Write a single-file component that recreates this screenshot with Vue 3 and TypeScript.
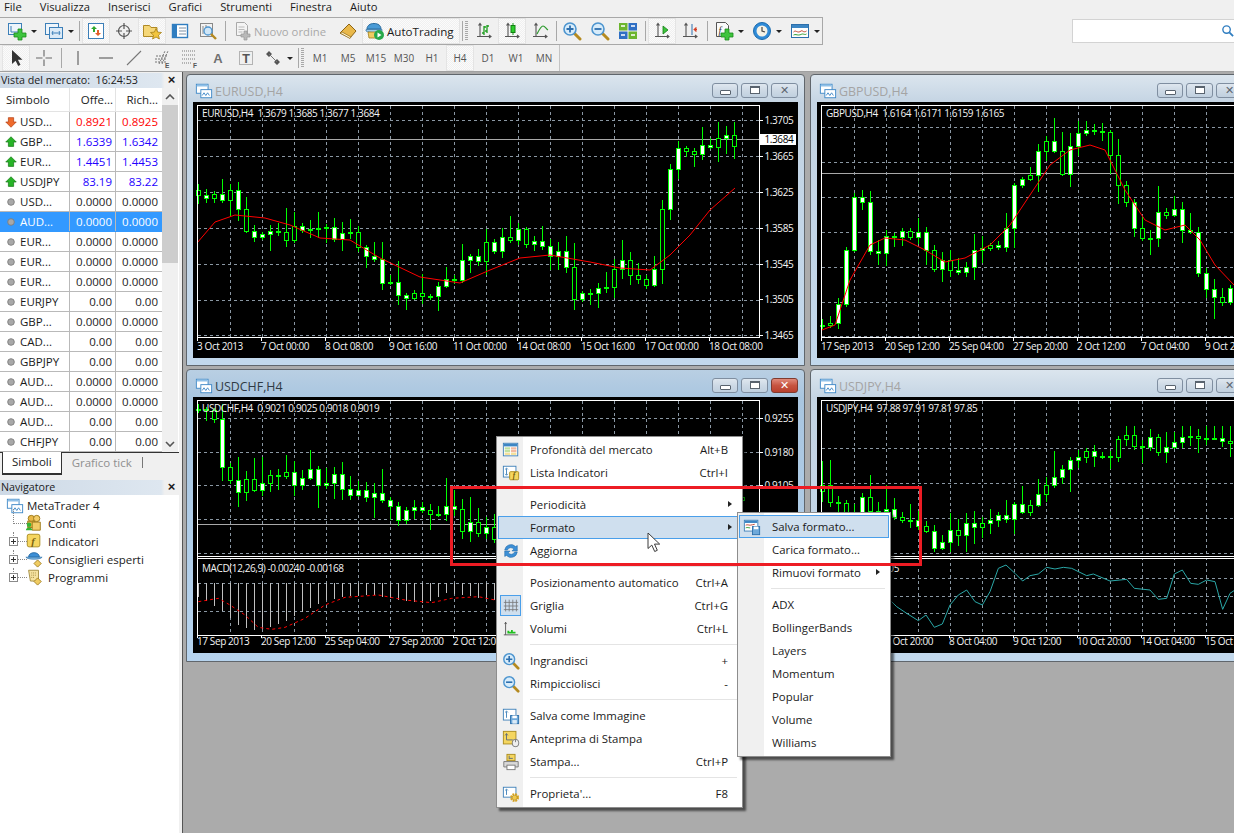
<script setup lang="ts">
type Pt = [number, number]

// ---- chart geometry helpers -------------------------------------------------
function rng(seed: number) {
  let s = seed
  return () => {
    s = (s * 16807) % 2147483647
    return (s % 1000) / 1000
  }
}

function at(path: Pt[], x: number) {
  if (x <= path[0][0]) return path[0][1]
  for (let i = 1; i < path.length; i++) {
    if (x <= path[i][0]) {
      const [x0, y0] = path[i - 1]
      const [x1, y1] = path[i]
      return y0 + ((y1 - y0) * (x - x0)) / (x1 - x0)
    }
  }
  return path[path.length - 1][1]
}

interface Candle { x: number; top: number; h: number; hi: number; lo: number; white: boolean }

function makeCandles(path: Pt[], x0: number, x1: number, seed: number, minY: number, maxY: number) {
  const r = rng(seed)
  const out: Candle[] = []
  let prev = at(path, x0)
  for (let x = x0; x <= x1; x += 8) {
    const close = at(path, x) + (r() - 0.5) * 18
    const top = Math.round(Math.max(minY, Math.min(prev, close)))
    const bot = Math.round(Math.min(maxY, Math.max(prev, close)))
    const hi = Math.max(minY, top - Math.round(r() * r() * 30) - 2)
    const lo = Math.min(maxY, bot + Math.round(r() * r() * 24) + 2)
    out.push({ x, top, h: Math.max(1, bot - top), hi, lo, white: close < prev ? r() > 0.25 : r() > 0.5 })
    prev = close
  }
  return out
}

function poly(pts: Pt[]) {
  return pts.map((p) => p.join(',')).join(' ')
}

function range(start: number, step: number, end: number) {
  const list: number[] = []
  for (let v = start; v <= end; v += step) list.push(v)
  return list
}

function scale3(ox: number, oy: number, raw: number[]): Pt[] {
  const pts: Pt[] = []
  for (let i = 0; i < raw.length; i += 2) pts.push([ox + raw[i] / 3, oy + raw[i + 1] / 3])
  return pts
}

const macdLow = scale3(185, 540, [40,170,120,220,160,255,200,270,240,268,300,245,360,210,420,180,480,170,560,165,640,180,720,190,780,160,860,170,930,180])
const macdSignal = scale3(185, 540, [40,185,100,175,135,195,180,225,220,262,260,268,300,262,360,235,420,195,480,172,580,165,660,180,740,188,800,175,880,170,930,180])
const jpyOsc = scale3(880, 500, [35,305,50,320,80,340,115,362,138,345,163,382,187,372,210,315,235,285,260,270,285,305,307,315,330,275,355,205,378,195,405,220,428,243,450,227,475,222,500,202,525,207,550,202,575,205,620,227,640,222,690,243,740,238,763,265,810,270,835,298,860,295,883,222,907,210,932,250,955,253,980,240,1005,245,1028,328,1050,280,1062,272])

const macdBars = range(198, 8, 744).map((x) => ({ x, y: Math.round(at(macdLow, x)) }))

interface Chart {
  title: string
  active: boolean
  x: number; y: number; w: number; h: number
  bx: number; by: number; bw: number; bh: number
  fx: number; fy: number; fr: number; fb: number
  info: string
  vGrid: number[]; hGrid: number[]
  priceLine: number
  prices: { y: number; t: string; box?: boolean }[]
  times: { x: number; t: string }[]
  candles: Candle[]
  ma: Pt[]
  sub?: 'macd' | 'osc'
  timeY: number
}

const eurPath: Pt[] = [[197,190],[215,195],[230,195],[240,210],[248,250],[262,240],[280,232],[300,232],[330,232],[345,232],[360,240],[370,255],[385,290],[400,290],[420,295],[440,280],[460,270],[470,255],[490,250],[520,235],[540,245],[560,250],[575,300],[590,300],[610,285],[625,260],[640,290],[655,265],[665,190],[680,150],[700,155],[715,130],[735,142]]
const eurMa: Pt[] = [[197,243],[215,222],[235,215],[265,218],[290,225],[320,238],[350,240],[380,258],[420,277],[460,283],[490,270],[520,258],[550,255],[590,262],[620,268],[650,270],[670,255],[690,235],[710,210],[735,188]]
const gbpPath: Pt[] = [[826,325],[835,320],[845,260],[850,180],[860,200],[870,250],[885,240],[900,240],[915,235],[930,260],[945,270],[960,265],[975,250],[985,260],[1000,240],[1015,190],[1030,170],[1050,125],[1060,170],[1080,130],[1100,135],[1115,170],[1130,215],[1145,250],[1160,215],[1175,210],[1190,240],[1200,290],[1215,300],[1234,295]]
const gbpMa: Pt[] = [[822,330],[835,325],[850,280],[870,245],[885,238],[905,240],[925,250],[945,262],[965,258],[990,245],[1010,225],[1030,195],[1050,165],[1070,150],[1090,145],[1105,150],[1125,190],[1145,220],[1165,230],[1185,225],[1200,240],[1215,265],[1234,285]]
const chfPath: Pt[] = [[197,410],[215,415],[225,480],[250,485],[280,482],[310,475],[330,478],[350,490],[380,500],[400,515],[430,510],[450,500],[460,525],[480,530],[495,540],[600,520],[745,500]]
const jpyPath: Pt[] = [[821,490],[840,505],[860,505],[880,510],[900,515],[920,530],[940,548],[960,525],[975,520],[995,520],[1015,510],[1040,490],[1060,470],[1085,450],[1110,450],[1130,440],[1160,445],[1190,440],[1234,445]]

const charts: Chart[] = [
  {
    title: 'EURUSD,H4', active: false,
    x: 186, y: 74, w: 619, h: 292, bx: 193, by: 102, bw: 605, bh: 256,
    fx: 197.5, fy: 105.5, fr: 759.5, fb: 337.5,
    info: 'EURUSD,H4  1.3679 1.3685 1.3677 1.3684',
    vGrid: range(230, 32, 758), hGrid: [120, 156, 192, 228, 264, 300, 335], priceLine: 139,
    prices: [
      { y: 120, t: '1.3705' }, { y: 139, t: '1.3684', box: true }, { y: 156, t: '1.3665' }, { y: 192, t: '1.3625' },
      { y: 228, t: '1.3585' }, { y: 264, t: '1.3545' }, { y: 299, t: '1.3505' }, { y: 335, t: '1.3465' },
    ],
    times: [
      { x: 197, t: '3 Oct 2013' }, { x: 261, t: '7 Oct 00:00' }, { x: 325, t: '8 Oct 08:00' }, { x: 389, t: '9 Oct 16:00' },
      { x: 453, t: '11 Oct 00:00' }, { x: 517, t: '14 Oct 08:00' }, { x: 581, t: '15 Oct 16:00' }, { x: 645, t: '17 Oct 00:00' }, { x: 709, t: '18 Oct 08:00' },
    ],
    candles: makeCandles(eurPath, 198, 736, 4711, 122, 336), ma: eurMa, timeY: 350,
  },
  {
    title: 'GBPUSD,H4', active: false,
    x: 810, y: 74, w: 440, h: 292, bx: 817, by: 102, bw: 430, bh: 256,
    fx: 821.5, fy: 105.5, fr: 1300, fb: 337.5,
    info: 'GBPUSD,H4  1.6164 1.6171 1.6159 1.6165',
    vGrid: range(854, 32, 1234), hGrid: [127, 162, 197, 232, 267, 302, 336], priceLine: 173,
    prices: [],
    times: [
      { x: 821, t: '17 Sep 2013' }, { x: 885, t: '20 Sep 12:00' }, { x: 949, t: '25 Sep 04:00' }, { x: 1013, t: '27 Sep 20:00' },
      { x: 1077, t: '2 Oct 12:00' }, { x: 1141, t: '7 Oct 04:00' }, { x: 1205, t: '9 Oct 20:00' },
    ],
    candles: makeCandles(gbpPath, 822, 1234, 9127, 118, 336), ma: gbpMa, timeY: 350,
  },
  {
    title: 'USDCHF,H4', active: true,
    x: 186, y: 369, w: 619, h: 293, bx: 193, by: 397, bw: 605, bh: 256,
    fx: 197.5, fy: 400.5, fr: 759.5, fb: 556.5,
    info: 'USDCHF,H4  0.9021 0.9025 0.9018 0.9019',
    vGrid: range(230, 32, 758), hGrid: [418, 452, 485, 519, 553], priceLine: 524,
    prices: [{ y: 418, t: '0.9255' }, { y: 452, t: '0.9180' }, { y: 485, t: '0.9105' }],
    times: [
      { x: 197, t: '17 Sep 2013' }, { x: 261, t: '20 Sep 12:00' }, { x: 325, t: '25 Sep 04:00' }, { x: 389, t: '27 Sep 20:00' }, { x: 453, t: '2 Oct 12:00' },
    ],
    candles: makeCandles(chfPath, 198, 744, 2231, 404, 554), ma: [], sub: 'macd', timeY: 645,
  },
  {
    title: 'USDJPY,H4', active: false,
    x: 810, y: 369, w: 440, h: 293, bx: 817, by: 397, bw: 430, bh: 256,
    fx: 821.5, fy: 400.5, fr: 1300, fb: 556.5,
    info: 'USDJPY,H4  97.88 97.91 97.81 97.85',
    vGrid: range(854, 32, 1234), hGrid: [448, 483, 518, 553], priceLine: 1000,
    prices: [],
    times: [
      { x: 885, t: '3 Oct 20:00' }, { x: 949, t: '8 Oct 04:00' }, { x: 1013, t: '9 Oct 12:00' }, { x: 1077, t: '10 Oct 20:00' }, { x: 1141, t: '14 Oct 04:00' }, { x: 1205, t: '15 Oct 12:00' },
    ],
    candles: makeCandles(jpyPath, 822, 1234, 6113, 426, 552), ma: [], sub: 'osc', timeY: 645,
  },
]

// ---- icons -------------------------------------------------------------------
const axes = '<path d="M6 2.5v13M3 15.5h14M4.5 4.5L6 2.5l1.5 2M15 14l2 1.5-2 1.5" fill="none" stroke="#555" stroke-width="1.1"/>'
const winA = '<rect x="1.5" y="2.5" width="13" height="10" fill="#fff" stroke="#3b86c6"/><rect x="2" y="3" width="12" height="2" fill="#8fc0e8"/>'
const winB = '<rect x="6.5" y="8.5" width="12" height="9" fill="#fff" stroke="#3b86c6"/><path d="M8 15l2-3 2 3 2-3 2 3" fill="none" stroke="#3b86c6"/>'
const plus = '<path d="M12 9h4v4h4v4h-4v3h-4v-3H8v-4h4z" fill="#3ec43e" stroke="#1a8a1a" stroke-width=".8" transform="translate(-1 -1)"/>'
const lens = (inner: string) =>
  `<path d="M12 12l6 6" stroke="#b58a1f" stroke-width="3" stroke-linecap="round"/><circle cx="8" cy="8" r="6" fill="#d8ecfa" stroke="#4d95cf" stroke-width="1.6"/>${inner}`
const lensPlus = lens('<path d="M4.5 8h7M8 4.5v7" stroke="#2d6fae" stroke-width="1.8"/>')
const lensMinus = lens('<path d="M4.5 8h7" stroke="#2d6fae" stroke-width="1.8"/>')

const icons: Record<string, string> = {
  newchart: `<rect x="1.5" y="2.5" width="13" height="11" fill="#eef5fb" stroke="#3c7fb8"/><path d="M4 5v6h7" fill="none" stroke="#3c7fb8"/>${plus}`,
  profiles: '<rect x="1.5" y="2.5" width="13" height="11" fill="#eef5fb" stroke="#3c7fb8"/><rect x="5.5" y="6.5" width="13" height="11" fill="#dbeaf7" stroke="#3c7fb8"/><path d="M8 12h8M9 10l-1 2 1 2M15 10l1 2-1 2" fill="none" stroke="#3c7fb8"/>',
  market: '<rect x="2.5" y="2.5" width="15" height="15" fill="#fff" stroke="#3c7fb8"/><path d="M8 5l3 3H9v3H7V8H5z" fill="#2fa82f"/><path d="M12 15l-3-3h2V9h2v3h2z" fill="#e2602a"/>',
  cross: '<circle cx="10" cy="10" r="5.5" fill="none" stroke="#555" stroke-width="1.2"/><path d="M10 2v6M10 12v6M2 10h6M12 10h6" stroke="#555" stroke-width="1.2"/>',
  folder: '<path d="M1.5 4.5h6l1.5 2h6v9h-13.5z" fill="#f5d778" stroke="#b08a25"/><path d="M14 7.5l1.6 3.6 3.9.4-3 2.6.9 3.9-3.4-2-3.4 2 .9-3.9-3-2.6 3.9-.4z" fill="#f2c53d" stroke="#a57f16" stroke-width=".8"/>',
  nav: '<rect x="2.5" y="3.5" width="15" height="13" fill="#fff" stroke="#2f7dc0" stroke-width="1.4"/><rect x="3" y="4" width="4" height="12" fill="#2f7dc0"/><path d="M9 7h7M9 10h7M9 13h7" stroke="#7b8ea3"/>',
  tester: '<rect x="2.5" y="2.5" width="12" height="13" fill="#f2f2f2" stroke="#888"/><path d="M5 5v8M8 4v6M11 6v5" stroke="#888"/><circle cx="10" cy="10" r="4" fill="#cfe6f7" stroke="#4d95cf" stroke-width="1.3"/><path d="M13 13l5 5" stroke="#b58a1f" stroke-width="2.4"/>',
  order: '<path d="M3.5 1.5h8l3 3v10h-11z" fill="#f4f4f4" stroke="#a9a9a9"/><path d="M5.5 6h6M5.5 8.5h6M5.5 11h4" stroke="#bbb"/><path d="M11 10h3v3h3v3h-3v3h-3v-3H8v-3h3z" fill="#b9b9b9" stroke="#9a9a9a" stroke-width=".7"/>',
  book: '<path d="M2 12L11 3l7 7-6 7z" fill="#e9b84a" stroke="#8d6414"/><path d="M2 12l10 5.5 1-1.5L4 11z" fill="#fff3c9" stroke="#8d6414" stroke-width=".7"/>',
  auto: '<path d="M2 8c0-3.5 3-5.500 7-5.500S16 4.500 16 8z" fill="#4a9bd6" stroke="#2b6c9e"/><path d="M1 8.500h16v1.500c-3 2-13 2-16 0z" fill="#9fcdea" stroke="#2b6c9e" stroke-width=".7"/><path d="M3 11h10l-1 6H4z" fill="#f0cc62" stroke="#a07d1c" stroke-width=".8"/><circle cx="14" cy="14" r="5" fill="#27a84a"/><path d="M12.500 11.500l4 2.500-4 2.500z" fill="#fff"/>',
  bars: `${axes}<path d="M10 5v9M10 12H8M10 6h2M13 4v8M13 10h-2M13 5h2" stroke="#1e9e1e" stroke-width="1.3" fill="none"/>`,
  candle: `${axes}<path d="M11 2v12" stroke="#1e9e1e"/><rect x="9" y="4.5" width="4" height="7" fill="#2ccf2c" stroke="#128012"/>`,
  line: `${axes}<path d="M7 13c2-4 4-8 6-8s3 3 5 4" fill="none" stroke="#2e9a2e" stroke-width="1.2"/>`,
  zoomin: lensPlus,
  zoomout: lensMinus,
  tile: '<rect x="1" y="2" width="8.5" height="7.5" fill="#6cb52e"/><rect x="10.5" y="2" width="8.5" height="7.5" fill="#2f6fc4"/><rect x="1" y="10.5" width="8.5" height="7.5" fill="#2f6fc4"/><rect x="10.5" y="10.5" width="8.5" height="7.5" fill="#6cb52e"/><path d="M3 5h4M13 5h4M3 14h4M13 14h4" stroke="#fff" stroke-width="1.5"/>',
  shift: `${axes}<path d="M11 5v8l5-4z" fill="#3bc43b" stroke="#157f15" stroke-width=".8"/>`,
  chartshift: `${axes}<path d="M12 3v11" stroke="#2d6fae"/><path d="M17 8.500h-3M14 8.500l2-2v4z" fill="#d43c22" stroke="#d43c22"/>`,
  indic: `<path d="M2.500 1.500h9l3 3v11h-12z" fill="#fafafa" stroke="#555"/><text x="4.500" y="13" font-size="10" font-style="italic" font-family="Liberation Serif" fill="#333">f</text>${plus}`,
  clock: '<circle cx="10" cy="10" r="8.500" fill="#2f8bd8" stroke="#1c6bac"/><circle cx="10" cy="10" r="5.500" fill="#f5f2e6"/><path d="M10 6v4l3 1" fill="none" stroke="#444" stroke-width="1.200"/>',
  templ: '<rect x="1.500" y="3.500" width="17" height="13" fill="#fff" stroke="#2c6fab"/><rect x="2" y="4" width="16" height="3" fill="#3c86c4"/><path d="M3.500 11c2-2 3 0 5 0s3-2 4-1 3 1 4 0" fill="none" stroke="#c2412b"/><path d="M3.500 14c2-1 3 0 5 0s3-1 4-1 3 1 4 0" fill="none" stroke="#2f9c2f"/>',
  arrow: '<path d="M6 2v14l3.600-3.300 2.600 5.300 2.300-1.200-2.600-5.100h4.600z" fill="#333"/>',
  crossthin: '<path d="M10 2v6.500M10 11.500V18M2 10h6.500M11.500 10H18" stroke="#666" stroke-width="1.100"/>',
  vline: '<path d="M10 3v14" stroke="#666" stroke-width="1.200"/>',
  hline: '<path d="M3 10h14" stroke="#666" stroke-width="1.200"/>',
  tline: '<path d="M3 17L17 3" stroke="#777" stroke-width="1.100"/>',
  fibo: '<path d="M3 14h11M3 11h12M4 8h12M7 16L13 3M10 16L16 3" stroke="#666" stroke-width=".9" stroke-dasharray="2 1"/><text x="13" y="20" font-size="6.500" font-weight="700" font-family="Liberation Sans" fill="#555">E</text>',
  gridf: '<path d="M2 3h14M2 7h14M2 11h14M2 15h10" stroke="#777" stroke-dasharray="1 1"/><text x="13" y="20" font-size="6.500" font-weight="700" font-family="Liberation Sans" fill="#555">F</text>',
  texta: '<text x="10" y="15" text-anchor="middle" font-size="13" font-weight="700" font-family="Liberation Sans" fill="#707070">A</text>',
  textt: '<rect x="3.500" y="3.500" width="13" height="13" fill="none" stroke="#777" stroke-dasharray="1 1"/><text x="10" y="15" text-anchor="middle" font-size="12.500" font-weight="700" font-family="Liberation Sans" fill="#555">T</text>',
  shapes: '<path d="M6 3l3 3-3 3-3-3zM14 11l3 3-3 3-3-3z" fill="#555"/><path d="M6 6l8 8" stroke="#777"/>',
  window: `${winA}${winB}`,
  depth: '<rect x="1.500" y="2.500" width="16" height="14" fill="#fff" stroke="#3c7fb8"/><rect x="2" y="3" width="15" height="3" fill="#3c86c4"/><rect x="3" y="7" width="6" height="2.500" fill="#bfe0a0"/><rect x="10" y="7" width="6" height="2.500" fill="#f2b9a0"/><rect x="3" y="10" width="6" height="2.500" fill="#bfe0a0"/><rect x="10" y="10" width="6" height="2.500" fill="#f2b9a0"/><rect x="3" y="13" width="6" height="2.500" fill="#f5e19a"/><rect x="10" y="13" width="6" height="2.500" fill="#f5e19a"/>',
  listind: '<rect x="1.500" y="2.500" width="14" height="12" fill="#fff" stroke="#3c7fb8"/><path d="M5 5v7M3.500 6L5 4.500 6.500 6M3.500 11L5 12.500 6.500 11" fill="none" stroke="#3c7fb8"/><rect x="8.500" y="8.500" width="10" height="9" rx="1" fill="#f5d65f" stroke="#a98a1c"/><text x="12" y="16" font-size="8" font-style="italic" font-weight="700" font-family="Liberation Serif" fill="#6d5708">f</text>',
  refresh: '<path d="M3 9a7 7 0 0 1 12-4l2-1v6h-6l2-2a4 4 0 0 0-7 1z" fill="#3c8fd6" stroke="#256ba6" stroke-width=".6"/><path d="M17 11a7 7 0 0 1-12 4l-2 1v-6h6l-2 2a4 4 0 0 0 7-1z" fill="#3c8fd6" stroke="#256ba6" stroke-width=".6"/>',
  griglia: '<path d="M4 3v13M8 3v13M12 3v13M16 3v13M2 6h16M2 10h16M2 14h16" stroke="#777" stroke-width=".9"/>',
  volumi: '<path d="M4 2.500v14M2 16.500h16M3 4.500l1-2 1 2" fill="none" stroke="#555"/><path d="M6 15v-3h2v1h2v-2h2v2h3v2z" fill="#1fc01f"/>',
  saveimg: '<rect x="1.500" y="2.500" width="14" height="12" fill="#fff" stroke="#3c7fb8"/><path d="M5 5v7M3.500 6L5 4.500 6.500 6" fill="none" stroke="#3c7fb8"/><rect x="9.500" y="9.500" width="9" height="9" fill="#6ea9da" stroke="#2c6fab"/><rect x="11.500" y="9.500" width="5" height="3" fill="#fff"/><rect x="11.500" y="14.500" width="5" height="4" fill="#dcebf7"/>',
  preview: '<rect x="1.500" y="1.500" width="14" height="14" fill="#f5d65f" stroke="#a98a1c"/><path d="M5 4v7h7M3.500 6L5 4l1.500 2" fill="none" stroke="#5b6a7a"/><rect x="11.500" y="10.500" width="7" height="8" rx="3" fill="#eee" stroke="#777"/><path d="M15 10.500v3" stroke="#777"/>',
  print: '<rect x="5.500" y="1.500" width="9" height="7" fill="#f5d65f" stroke="#a98a1c"/><path d="M2 9.500h16v6H2z" fill="#d9d9d9" stroke="#777"/><rect x="5.500" y="13.500" width="9" height="5" fill="#fff" stroke="#777"/><path d="M8 3v4M8 6h4" stroke="#5b6a7a" fill="none"/>',
  props: '<rect x="1.500" y="2.500" width="14" height="11" fill="#fff" stroke="#3c7fb8"/><path d="M5 5v6M3.500 6L5 4.500 6.500 6" fill="none" stroke="#3c7fb8"/><circle cx="14" cy="14" r="3.800" fill="none" stroke="#d9a41f" stroke-width="2.200" stroke-dasharray="2 1"/><circle cx="14" cy="14" r="2.800" fill="#f0c84b" stroke="#a67c10" stroke-width=".6"/>',
  saveform: '<rect x="1.500" y="2.500" width="15" height="12" fill="#fff" stroke="#3c7fb8"/><rect x="2" y="3" width="14" height="2.500" fill="#3c86c4"/><path d="M3 8c2-1 3 0 5 0s3-1 5-1" fill="none" stroke="#c2412b"/><path d="M3 11c2-1 3 0 5 0" fill="none" stroke="#2f9c2f"/><rect x="10.500" y="9.500" width="8" height="9" fill="#6ea9da" stroke="#2c6fab"/><rect x="12" y="9.500" width="5" height="3" fill="#fff"/>',
  conti: '<circle cx="7" cy="5" r="3.500" fill="#e9b848" stroke="#9a7717"/><rect x="3" y="8" width="8" height="7" fill="#e9b848" stroke="#9a7717"/><circle cx="13" cy="5" r="3.500" fill="#f3cd68" stroke="#9a7717"/><path d="M8 18V9h9v9z" fill="#f3cd68" stroke="#9a7717"/><circle cx="4.500" cy="12" r="2.500" fill="#36b336"/><path d="M1 18c0-4 7-4 7 0z" fill="#36b336"/>',
  indicatori: '<rect x="2.500" y="2.500" width="14" height="14" rx="2" fill="#f5d65f" stroke="#a98a1c"/><text x="7" y="14" font-size="12" font-style="italic" font-weight="700" font-family="Liberation Serif" fill="#7a6210">f</text>',
  esperti: '<path d="M4 8c0-3.500 3-5 6-5s6 1.500 6 5z" fill="#3c8fd6" stroke="#256ba6"/><path d="M1 8h18c-2 3-16 3-18 0z" fill="#7fb8e4" stroke="#256ba6" stroke-width=".7"/><path d="M14 11l4 4-4 4-4-4z" fill="#f0cc62" stroke="#a07d1c"/>',
  programmi: '<path d="M4 2.500h11v12H6z" fill="#f5e2a0" stroke="#a08a3c"/><path d="M7 5.500h5M7 8h5M7 10.500h3" stroke="#a08a3c" stroke-dasharray="1 1"/><path d="M14 11l4 4-4 4-4-4z" fill="#f0cc62" stroke="#a07d1c"/>',
  up: '<path d="M8 2l6 6h-3v5H5V8H2z" fill="#27b327" stroke="#127512" stroke-width=".8"/>',
  down: '<path d="M8 14L2 8h3V3h6v5h3z" fill="#ee6a2c" stroke="#b23c10" stroke-width=".8"/>',
  idle: '<circle cx="8" cy="8" r="3.800" fill="#a8a8a8" stroke="#7c7c7c"/>',
}

// ---- toolbars ---------------------------------------------------------------
interface Tool { k: 'btn' | 'sep' | 'grip' | 'txt'; w: number; icon?: string; on?: boolean; caret?: boolean; label?: string; dim?: boolean }
const b = (icon: string, on = false): Tool => ({ k: 'btn', w: 28, icon, on })
const c = (icon: string, w = 38): Tool => ({ k: 'btn', w, icon, caret: true })
const s = (w = 6): Tool => ({ k: 'sep', w })

const row1: Tool[] = [
  c('newchart', 37), c('profiles', 37), s(5), b('market', true), b('cross'), b('folder', true), b('nav'), b('tester'), s(),
  { k: 'btn', w: 106, icon: 'order', label: 'Nuovo ordine', dim: true }, { k: 'btn', w: 28, icon: 'book' },
  { k: 'btn', w: 98, icon: 'auto', label: 'AutoTrading', on: true }, s(4), { k: 'grip', w: 6 },
  b('bars'), b('candle', true), b('line'), s(4), b('zoomin'), b('zoomout'), b('tile'), s(),
  b('shift', true), b('chartshift'), s(), c('indic'), c('clock'), c('templ'),
]
const row2: Tool[] = [
  b('arrow', true), b('crossthin'), s(), b('vline'), b('hline'), b('tline'), b('fibo'), b('gridf'), b('texta'), b('textt'),
  c('shapes', 36), s(4), { k: 'grip', w: 6 },
  ...['M1', 'M5', 'M15', 'M30', 'H1', 'H4', 'D1', 'W1', 'MN'].map((t): Tool => ({ k: 'txt', w: 28, label: t, on: t === 'H4' })),
]

const menus = ['File', 'Visualizza', 'Inserisci', 'Grafici', 'Strumenti', 'Finestra', 'Aiuto']

// ---- market watch -----------------------------------------------------------
const quotes: { s: string; bid: string; ask: string; icon: string; tone: string; sel?: boolean }[] = [
  { s: 'USD...', bid: '0.8921', ask: '0.8925', icon: 'down', tone: 'red' },
  { s: 'GBP...', bid: '1.6339', ask: '1.6342', icon: 'up', tone: 'blue' },
  { s: 'EUR...', bid: '1.4451', ask: '1.4453', icon: 'up', tone: 'blue' },
  { s: 'USDJPY', bid: '83.19', ask: '83.22', icon: 'up', tone: 'blue' },
  { s: 'USD...', bid: '0.0000', ask: '0.0000', icon: 'idle', tone: '' },
  { s: 'AUD...', bid: '0.0000', ask: '0.0000', icon: 'idle', tone: '', sel: true },
  { s: 'EUR...', bid: '0.0000', ask: '0.0000', icon: 'idle', tone: '' },
  { s: 'EUR...', bid: '0.0000', ask: '0.0000', icon: 'idle', tone: '' },
  { s: 'EUR...', bid: '0.0000', ask: '0.0000', icon: 'idle', tone: '' },
  { s: 'EURJPY', bid: '0.00', ask: '0.00', icon: 'idle', tone: '' },
  { s: 'GBP...', bid: '0.0000', ask: '0.0000', icon: 'idle', tone: '' },
  { s: 'CAD...', bid: '0.00', ask: '0.00', icon: 'idle', tone: '' },
  { s: 'GBPJPY', bid: '0.00', ask: '0.00', icon: 'idle', tone: '' },
  { s: 'AUD...', bid: '0.0000', ask: '0.0000', icon: 'idle', tone: '' },
  { s: 'AUD...', bid: '0.0000', ask: '0.0000', icon: 'idle', tone: '' },
  { s: 'AUD...', bid: '0.00', ask: '0.00', icon: 'idle', tone: '' },
  { s: 'CHFJPY', bid: '0.00', ask: '0.00', icon: 'idle', tone: '' },
]

const tree = [
  { label: 'Conti', icon: 'conti', plus: false },
  { label: 'Indicatori', icon: 'indicatori', plus: true },
  { label: 'Consiglieri esperti', icon: 'esperti', plus: true },
  { label: 'Programmi', icon: 'programmi', plus: true },
]

// ---- context menus ----------------------------------------------------------
interface Entry { label?: string; key?: string; icon?: string; arrow?: boolean; hot?: boolean; boxed?: boolean }
const mainMenu: Entry[] = [
  { label: 'Profondità del mercato', key: 'Alt+B', icon: 'depth' },
  { label: 'Lista Indicatori', key: 'Ctrl+I', icon: 'listind' },
  {},
  { label: 'Periodicità', arrow: true },
  { label: 'Formato', arrow: true, hot: true },
  { label: 'Aggiorna', icon: 'refresh' },
  {},
  { label: 'Posizionamento automatico', key: 'Ctrl+A' },
  { label: 'Griglia', key: 'Ctrl+G', icon: 'griglia', boxed: true },
  { label: 'Volumi', key: 'Ctrl+L', icon: 'volumi' },
  {},
  { label: 'Ingrandisci', key: '+', icon: 'zoomin' },
  { label: 'Rimpicciolisci', key: '-', icon: 'zoomout' },
  {},
  { label: 'Salva come Immagine', icon: 'saveimg' },
  { label: 'Anteprima di Stampa', icon: 'preview' },
  { label: 'Stampa...', key: 'Ctrl+P', icon: 'print' },
  {},
  { label: "Proprieta'...", key: 'F8', icon: 'props' },
]
const subMenu: Entry[] = [
  { label: 'Salva formato...', icon: 'saveform', hot: true },
  { label: 'Carica formato...' },
  { label: 'Rimuovi formato', arrow: true },
  {},
  { label: 'ADX' }, { label: 'BollingerBands' }, { label: 'Layers' }, { label: 'Momentum' },
  { label: 'Popular' }, { label: 'Volume' }, { label: 'Williams' },
]
</script>

<template>
  <div class="app">
    <div class="menubar">
      <span v-for="m in menus" :key="m" class="menubar-item">{{ m }}</span>
    </div>

    <div class="toolrow first">
      <div class="toolgroup">
        <template v-for="(t, i) in row1" :key="i">
          <div v-if="t.k === 'sep'" class="sep" :style="{ width: t.w + 'px' }"><i></i></div>
          <div v-else-if="t.k === 'grip'" class="grip" :style="{ width: t.w + 'px' }"></div>
          <div v-else class="tool" :class="{ on: t.on, dim: t.dim, labelled: t.label }" :style="{ width: t.w + 'px' }">
            <svg v-if="t.icon" class="ic" viewBox="0 0 20 20" v-html="icons[t.icon]"></svg>
            <span v-if="t.label">{{ t.label }}</span>
            <b v-if="t.caret" class="caret"></b>
          </div>
        </template>
      </div>
      <div class="search">
        <svg class="search-ic" viewBox="0 0 14 14"><circle cx="6" cy="6" r="4" fill="none" stroke="#2f7dc0" stroke-width="1.5"/><path d="M9 9l4 4" stroke="#2f7dc0" stroke-width="2"/></svg>
      </div>
    </div>

    <div class="toolrow second">
      <template v-for="(t, i) in row2" :key="i">
        <div v-if="t.k === 'sep'" class="sep" :style="{ width: t.w + 'px' }"><i></i></div>
        <div v-else-if="t.k === 'grip'" class="grip" :style="{ width: t.w + 'px' }"></div>
        <div v-else-if="t.k === 'txt'" class="tool period" :class="{ on: t.on }" :style="{ width: t.w + 'px' }">{{ t.label }}</div>
        <div v-else class="tool" :class="{ on: t.on }" :style="{ width: t.w + 'px' }">
          <svg class="ic" viewBox="0 0 20 20" v-html="icons[t.icon!]"></svg>
          <b v-if="t.caret" class="caret"></b>
        </div>
      </template>
      <div class="row-end"></div>
    </div>

    <div class="main">
      <aside class="side">
        <div class="pane-title"><span>Vista del mercato:&nbsp; 16:24:53</span><em>×</em></div>
        <div class="watch">
          <div class="watch-table">
            <div class="wrow head">
              <div class="c1 pl">Simbolo</div><div class="c2">Offe...</div><div class="c3">Rich...</div>
            </div>
            <div v-for="(q, i) in quotes" :key="i" class="wrow" :class="[q.tone, { sel: q.sel }]">
              <div class="c1">
                <svg class="q-ic" viewBox="0 0 16 16" v-html="icons[q.icon]"></svg>{{ q.s }}
              </div>
              <div class="c2">{{ q.bid }}</div>
              <div class="c3">{{ q.ask }}</div>
            </div>
          </div>
          <div class="scroll">
            <div class="scroll-btn">
              <svg viewBox="0 0 10 6" width="10" height="6"><path d="M1 5l4-4 4 4" fill="none" stroke="#555" stroke-width="1.6"/></svg>
            </div>
            <div class="scroll-thumb"></div>
            <div class="scroll-track"></div>
            <div class="scroll-btn">
              <svg viewBox="0 0 10 6" width="10" height="6"><path d="M1 1l4 4 4-4" fill="none" stroke="#555" stroke-width="1.6"/></svg>
            </div>
          </div>
        </div>
        <div class="tabs">
          <div class="tab current">Simboli</div>
          <div class="tab">Grafico tick</div>
          <i class="tab-bar"></i>
        </div>
        <div class="pane-title nav-title"><span>Navigatore</span><em>×</em></div>
        <div class="tree">
          <div class="tree-root">
            <svg class="tree-ic" viewBox="0 0 20 20" v-html="icons.window"></svg>MetaTrader 4
          </div>
          <div v-for="n in tree" :key="n.label" class="tree-row">
            <i class="twig"></i>
            <i v-if="n.plus" class="plus"></i>
            <svg class="tree-ic" viewBox="0 0 20 20" v-html="icons[n.icon]"></svg>{{ n.label }}
          </div>
        </div>
      </aside>

      <div class="mdi">
        <div
          v-for="ch in charts"
          :key="ch.title"
          class="win"
          :class="{ active: ch.active }"
          :style="{ left: ch.x - 183 + 'px', top: ch.y - 72 + 'px', width: ch.w + 'px', height: ch.h + 'px' }"
        >
          <div class="win-title">
            <svg class="win-ic" viewBox="0 0 20 20" v-html="icons.window"></svg>
            <span>{{ ch.title }}</span>
            <div class="win-btns">
              <div class="wbtn wmin"><i class="g-min"></i></div>
              <div class="wbtn"><i class="g-max"></i></div>
              <div class="wbtn close"><span>✕</span></div>
            </div>
          </div>
          <svg
            class="chart"
            :width="ch.bw"
            :height="ch.bh"
            :viewBox="`${ch.bx} ${ch.by} ${ch.bw} ${ch.bh}`"
          >
            <rect :x="ch.bx" :y="ch.by" :width="ch.bw" :height="ch.bh" fill="#000" />
            <g shape-rendering="crispEdges">
              <line v-for="v in ch.vGrid" :key="'v' + v" :x1="v + 0.5" :x2="v + 0.5" :y1="ch.fy" :y2="ch.sub ? 635 : ch.fb" class="grid" />
              <line v-for="h in ch.hGrid" :key="'h' + h" :x1="ch.fx" :x2="ch.fr" :y1="h + 0.5" :y2="h + 0.5" class="grid" />
              <line :x1="ch.fx" :x2="ch.fr" :y1="ch.priceLine + 0.5" :y2="ch.priceLine + 0.5" stroke="#a8a8a8" />
              <template v-for="(cd, i) in ch.candles" :key="i">
                <line :x1="cd.x + 0.5" :x2="cd.x + 0.5" :y1="cd.hi" :y2="cd.lo" stroke="#00ff00" />
                <rect :x="cd.x - 2 + 0.5" :y="cd.top + 0.5" width="4" :height="cd.h" :fill="cd.white ? '#fff' : '#000'" stroke="#00ff00" />
              </template>
            </g>
            <polyline v-if="ch.ma.length" :points="poly(ch.ma)" fill="none" stroke="#ff0000" />

            <!-- separate indicator window -->
            <template v-if="ch.sub">
              <rect :x="ch.bx" y="557" :width="ch.bw" height="2" fill="#000" />
              <line :x1="ch.fx" :x2="ch.fr" y1="558.5" y2="558.5" stroke="#fff" shape-rendering="crispEdges" />
            </template>
            <template v-if="ch.sub === 'macd'">
              <g shape-rendering="crispEdges">
                <line v-for="h in [583, 611]" :key="h" :x1="ch.fx" :x2="ch.fr" :y1="h + 0.5" :y2="h + 0.5" class="grid" />
                <line v-for="m in macdBars" :key="m.x" :x1="m.x + 0.5" :x2="m.x + 0.5" y1="583" :y2="m.y" stroke="#c0c0c0" />
              </g>
              <polyline :points="poly(macdSignal)" fill="none" stroke="#ff0000" stroke-dasharray="3 3" />
              <text x="202" y="572" class="lbl">MACD(12,26,9) -0.00240 -0.00168</text>
            </template>
            <template v-if="ch.sub === 'osc'">
              <g shape-rendering="crispEdges">
                <line v-for="h in [578, 596, 613]" :key="h" :x1="ch.fx" :x2="ch.fr" :y1="h + 0.5" :y2="h + 0.5" class="grid" />
              </g>
              <polyline :points="poly(jpyOsc)" fill="none" stroke="#2aa7a7" />
              <text x="899" y="572" class="lbl" text-anchor="end">0.0005</text>
            </template>

            <!-- frame -->
            <path
              :d="`M${ch.fx} ${ch.sub ? 635.5 : ch.fb}V${ch.fy}H${ch.fr}V${ch.sub ? 635.5 : ch.fb}Z`"
              fill="none"
              stroke="#fff"
              shape-rendering="crispEdges"
            />
            <line v-if="ch.sub" :x1="ch.fx" :x2="ch.fr" y1="556.5" y2="556.5" stroke="#fff" shape-rendering="crispEdges" />

            <text :x="ch.fx + 4.5" :y="ch.fy + 11.5" class="lbl info">{{ ch.info }}</text>
            <template v-for="p in ch.prices" :key="p.t">
              <line :x1="ch.fr" :x2="ch.fr + 3" :y1="p.y + 0.5" :y2="p.y + 0.5" stroke="#fff" shape-rendering="crispEdges" />
              <rect v-if="p.box" :x="ch.fr + 0.5" :y="p.y - 5" width="36" height="11" fill="#fff" />
              <text :x="ch.fr + 5" :y="p.y + 4" class="lbl" :class="{ inv: p.box }">{{ p.t }}</text>
            </template>
            <template v-for="t in ch.times" :key="t.t">
              <line :x1="t.x + 0.5" :x2="t.x + 0.5" :y1="ch.sub ? 635 : ch.fb" :y2="(ch.sub ? 635 : ch.fb) + 3" stroke="#fff" shape-rendering="crispEdges" />
              <text :x="t.x" :y="ch.timeY" class="lbl">{{ t.t }}</text>
            </template>
          </svg>
        </div>
      </div>
    </div>

    <!-- popup menus -->
    <div class="popup main-menu">
      <template v-for="(e, i) in mainMenu" :key="i">
        <div v-if="!e.label" class="pop-sep"></div>
        <div v-else class="pop-item" :class="{ hot: e.hot }">
          <div class="pop-icon" :class="{ boxed: e.boxed }">
            <svg v-if="e.icon" viewBox="0 0 20 20" width="18" height="18" v-html="icons[e.icon]"></svg>
          </div>
          <span class="pop-label">{{ e.label }}</span>
          <span v-if="e.key" class="pop-key">{{ e.key }}</span>
          <b v-if="e.arrow" class="pop-arrow"></b>
        </div>
      </template>
    </div>
    <div class="popup sub-menu">
      <template v-for="(e, i) in subMenu" :key="i">
        <div v-if="!e.label" class="pop-sep"></div>
        <div v-else class="pop-item" :class="{ hot: e.hot }">
          <div class="pop-icon">
            <svg v-if="e.icon" viewBox="0 0 20 20" width="18" height="18" v-html="icons[e.icon]"></svg>
          </div>
          <span class="pop-label">{{ e.label }}</span>
          <b v-if="e.arrow" class="pop-arrow"></b>
        </div>
      </template>
    </div>

    <div class="callout"></div>
    <svg class="pointer" viewBox="0 0 14 21" width="14" height="21">
      <path d="M1 1v15.5l3.800-3.400 2.900 6.400 2.600-1.200-2.800-6.200h5.200z" fill="#fff" stroke="#3a3a3a" />
    </svg>
  </div>
</template>

<style scoped>
.app {
  position: relative;
  width: 1234px;
  height: 833px;
  overflow: hidden;
  display: flex;
  flex-direction: column;
  background: #f0f0f0;
  font-family: "Open Sans", "Noto Sans", sans-serif;
  font-size: 11.5px;
  color: #1b1b1b;
}

.menubar { height: 17px; display: flex; align-items: center; padding-left: 4px; gap: 18px; flex: none; padding-bottom: 3px; box-sizing: border-box; font-size: 11.2px; }
.menubar-item { line-height: 14px; }

.toolrow { display: flex; flex: none; }
.toolrow.first { height: 28px; }
.toolrow.second { height: 27px; padding-left: 2px; border-bottom: 1px solid #a0a0a0; box-sizing: border-box; }
.toolgroup {
  display: flex; width: 823px; height: 28px; padding-left: 3px; box-sizing: border-box;
  border: 1px solid #a8a8a8; border-left: none;
}
.search {
  margin-left: auto; width: 161px; height: 22px; margin-top: 2px; background: #fff;
  border: 1px solid #d3d3d3; border-right: none; position: relative;
}
.search-ic { position: absolute; right: 0; top: 4px; width: 13px; height: 13px; }

.tool {
  display: flex; align-items: center; justify-content: center; gap: 4px; flex: none;
  box-sizing: border-box; margin: 0; height: 26px; white-space: nowrap;
}
.tool.on {
  background: #f8f8f8 repeating-conic-gradient(#f0f0f0 0 25%, #fbfbfb 0 50%) 0 0 / 2px 2px;
  box-shadow: inset 0 0 0 1px #e4e4e4, inset 1px 1px 0 #c8c8c8;
}
.tool.labelled { gap: 2px; justify-content: flex-start; padding-left: 3px; font-size: 11.6px; }
.tool.dim { color: #a9a9a9; padding-left: 5px; gap: 1px; font-size: 11.3px; }
.ic { width: 20px; height: 20px; flex: none; }
.caret { width: 0; height: 0; border: 3px solid transparent; border-top: 3px solid #222; border-bottom: none; flex: none; }
.period { font-size: 10px; color: #555; }
.sep { display: flex; justify-content: center; flex: none; align-items: center; height: 26px; }
.sep i { width: 1px; height: 20px; background: #a8a8a8; }
.grip { flex: none; height: 26px; position: relative; }
.grip::before {
  content: ""; position: absolute; left: 1px; top: 3px; bottom: 3px; width: 3px;
  background: repeating-linear-gradient(#a8a8a8 0 1px, transparent 1px 2px);
}
.row-end { width: 1px; height: 26px; background: #c4c4c4; margin-left: 1px; }

.main { flex: 1; display: flex; min-height: 0; }

.side {
  width: 183px; flex: none; box-sizing: border-box; padding-right: 3px;
  display: flex; flex-direction: column; background: #f0f0f0; border-right: 1px solid #555;
}
.pane-title {
  height: 15px; margin-top: 1px; display: flex; align-items: center; justify-content: space-between;
  padding: 0 0 0 1px; background: linear-gradient(90deg, #cdd9e6, #dee7f0 90%, #f0f0f0 92%); flex: none;
  line-height: 14px; font-size: 10.7px; padding-bottom: 1px; box-sizing: border-box;
}
.pane-title em { font-style: normal; font-weight: 700; font-size: 13px; width: 15px; text-align: center; font-family: "Liberation Sans", sans-serif; }
.nav-title { margin-top: 6px; }

.watch { display: flex; height: 364px; flex: none; background: #fff; position: relative; }
.watch-table { width: 162px; flex: none; }
.wrow { display: flex; height: 20px; line-height: 19px; border-bottom: 1px solid #b9b9b9; box-sizing: border-box; }
.wrow.head { height: 24px; line-height: 23px; border-bottom: 1px solid #e3e3e3; }
.wrow > div { white-space: nowrap; box-sizing: border-box; }
.c1 { width: 69px; display: flex; align-items: center; padding-left: 4px; gap: 2px; }
.c1.pl { padding-left: 6px; }
.c2 { width: 46px; text-align: right; padding-right: 3px; border-left: 1px solid #b9b9b9; }
.c3 { width: 47px; text-align: right; padding-right: 4px; border-left: 1px solid #b9b9b9; }
.head .c2, .head .c3 { border-left-color: #e3e3e3; }
.head .c2 { padding-right: 2px; }
.q-ic { width: 14px; height: 14px; flex: none; }
.red .c2, .red .c3 { color: #ff0000; }
.blue .c2, .blue .c3 { color: #2400ff; }
.wrow.sel { background: #3399ff; color: #fff; border-bottom-color: #3399ff; }

.scroll { width: 16px; display: flex; flex-direction: column; background: #f0f0f0; flex: none; }
.scroll-btn { height: 17px; display: flex; align-items: center; justify-content: center; flex: none; }
.scroll-thumb { height: 158px; background: #cdcdcd; flex: none; }
.scroll-track { flex: 1; }

.tabs { display: flex; align-items: flex-start; height: 22px; padding-left: 2px; flex: none; box-sizing: border-box; border-top: 1px solid #333; }
.tab { height: 20px; line-height: 19px; padding: 0 10px; color: #8f8f8f; }
.tab.current { color: #1b1b1b; background: #fff; border: 1px solid #333; border-top: none; border-bottom-width: 2px; margin-top: -1px; height: 21px; padding: 0 9px; }
.tab-bar { width: 1px; height: 11px; background: #777; margin: 4px 0 0 0; }

.tree { background: #fff; flex: 1; padding: 2px 0 0 6px; }
.tree-root, .tree-row { height: 18px; display: flex; align-items: center; white-space: nowrap; position: relative; }
.tree-root { height: 17px; }
.tree-root .tree-ic { margin-right: 3px; }
.tree-row { padding-left: 19px; }
.tree-ic { width: 18px; height: 18px; flex: none; margin-right: 5px; }
.twig {
  position: absolute; left: 7px; top: -5px; height: 14px; width: 13px;
  border-left: 1px dotted #888; border-bottom: 1px dotted #888;
}
.tree-row + .tree-row .twig { top: 0; height: 9px; }
.plus {
  position: absolute; left: 3px; top: 5px; width: 9px; height: 9px; box-sizing: border-box;
  border: 1px solid #8a8a8a; background:
    linear-gradient(#333, #333) center / 5px 1px no-repeat,
    linear-gradient(#333, #333) center / 1px 5px no-repeat,
    #fff;
}

.mdi { flex: 1; position: relative; background: #ababab; overflow: hidden; }

.win {
  position: absolute; box-sizing: border-box; border: 1px solid #60666c;
  border-radius: 4px 4px 0 0; padding: 0 6px 7px;
  background: linear-gradient(#dbe5ee, #c4d4e3 28px, #c2d8ec);
}
.win.active { background: linear-gradient(#b9cfe3, #a9c6e0 28px, #b6d3ee); }
.win-title { height: 27px; display: flex; align-items: center; color: #a4a4a4; font-size: 12.4px; padding: 5px 0 0 2px; box-sizing: border-box; }
.win.active .win-title { color: #2f3a44; }
.win-ic { width: 18px; height: 18px; margin-right: 2px; flex: none; }
.win-btns { margin-left: auto; display: flex; gap: 3px; margin-top: -2px; }
.wbtn {
  width: 25px; height: 13px; border: 1px solid #7f8ea0; border-radius: 3px; box-sizing: content-box;
  display: flex; align-items: center; justify-content: center;
  background: linear-gradient(#dfe7ef, #cdd9e5 50%, #c0d0df);
}
.wbtn.wmin { width: 24px; }
.g-min { width: 9px; height: 3px; border: 1px solid #59636e; border-radius: 1px; background: #fff; margin-top: 4px; }
.g-max { width: 8px; height: 5px; border: 1px solid #59636e; border-top-width: 2px; background: #fff; }
.close span { color: #5c6670; font-size: 11px; font-weight: 700; line-height: 13px; font-family: "DejaVu Sans", sans-serif; }
.win.active .close { background: linear-gradient(#e08a7a, #c75440 50%, #b9402d); border-color: #803a2f; }
.win.active .close span { color: #fff; }
.chart { display: block; }
.grid { stroke: #8a97a3; stroke-dasharray: 3 3; }
.lbl { fill: #f4f4f4; font-family: "Open Sans", "Noto Sans", sans-serif; font-size: 10px; letter-spacing: -0.4px; white-space: pre; }
.lbl.inv { fill: #000; }

.popup {
  position: absolute; box-sizing: border-box; background: #fff; border: 1px solid #8d8d8d;
  box-shadow: 3px 3px 2px rgba(0, 0, 0, 0.55); padding: 2px 1px;
}
.popup::before { content: ""; position: absolute; left: 0; top: 0; bottom: 0; background: #f0f0f0; }
.main-menu { left: 496px; top: 436px; width: 247px; height: 372px; padding-top: 1px; font-size: 11.4px; }
.main-menu::before { width: 26px; }
.sub-menu { left: 737px; top: 512px; width: 154px; height: 245px; font-size: 11.4px; }
.sub-menu::before { width: 26px; }
.pop-item { height: 23px; display: flex; align-items: center; position: relative; box-sizing: border-box; white-space: nowrap; }
.pop-item.hot { background: #cfdfee; box-shadow: inset 0 0 0 1px #4a9fea; margin: 0; }
.main-menu .pop-item { padding-right: 13px; }
.pop-icon { width: 25px; height: 23px; display: flex; align-items: center; justify-content: center; flex: none; margin-right: 7px; box-sizing: border-box; }
.sub-menu .pop-icon { margin-right: 8px; }
.pop-icon.boxed { background: #cfdfee; box-shadow: inset 0 0 0 1px #4a9fea; height: 21px; width: 21px; margin: 0 9px 0 2px; }
.pop-label { flex: 1; }
.pop-key { flex: none; }
.pop-arrow { position: absolute; right: 9px; top: 8px; width: 0; height: 0; border: 3px solid transparent; border-left: 4px solid #222; border-right: none; }
.pop-sep { height: 9px; position: relative; }
.pop-sep::after { content: ""; position: absolute; left: 32px; right: 4px; top: 4px; height: 1px; background: #e4e4e4; }

.callout {
  position: absolute; left: 450px; top: 486px; width: 472px; height: 80px; box-sizing: border-box;
  border: 3px solid #ed1c24; pointer-events: none;
}
.pointer { position: absolute; left: 647px; top: 532px; }
</style>
